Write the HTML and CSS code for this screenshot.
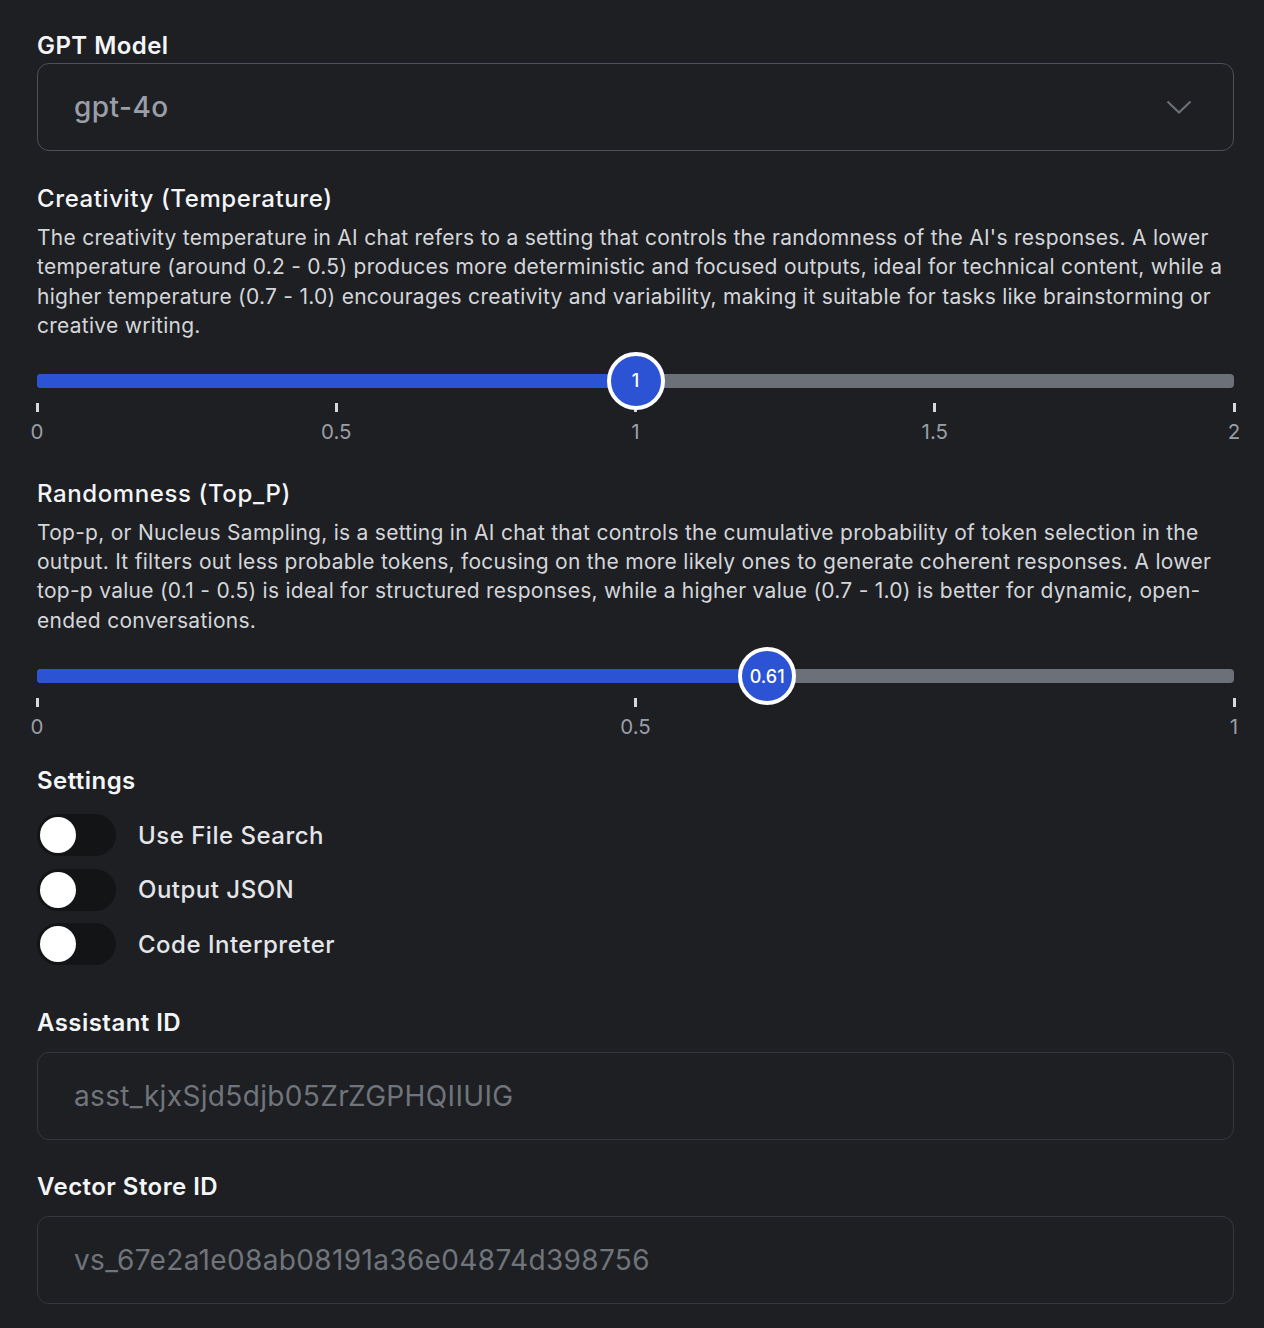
FILE: index.html
```html
<!DOCTYPE html>
<html>
<head>
<meta charset="utf-8">
<link rel="stylesheet" href="styles.css">
</head>
<body>
<div class="panel">
  <div class="field">
    <div class="label">GPT Model</div>
    <div class="select">
      <span class="select-value">gpt-4o</span>
      <svg class="chevron" width="26" height="15" viewBox="0 0 26 15"><path d="M1.5 1.5 L13 12.5 L24.5 1.5" fill="none" stroke="#6b7078" stroke-width="2.2"/></svg>
    </div>
  </div>

  <div class="section">
    <div class="heading">Creativity (Temperature)</div>
    <p class="desc">The creativity temperature in AI chat refers to a setting that controls the randomness of the AI's responses. A lower temperature (around 0.2 - 0.5) produces more deterministic and focused outputs, ideal for technical content, while a higher temperature (0.7 - 1.0) encourages creativity and variability, making it suitable for tasks like brainstorming or creative writing.</p>
    <div class="slider">
      <div class="track">
        <div class="fill" style="width:50%"></div>
        <div class="thumb" style="left:50%">1</div>
      </div>
      <div class="ticks">
        <div class="tick"><span class="mark"></span><span class="tick-label">0</span></div>
        <div class="tick"><span class="mark"></span><span class="tick-label">0.5</span></div>
        <div class="tick"><span class="mark"></span><span class="tick-label">1</span></div>
        <div class="tick"><span class="mark"></span><span class="tick-label">1.5</span></div>
        <div class="tick"><span class="mark"></span><span class="tick-label">2</span></div>
      </div>
    </div>
  </div>

  <div class="section second">
    <div class="heading">Randomness (Top_P)</div>
    <p class="desc">Top-p, or Nucleus Sampling, is a setting in AI chat that controls the cumulative probability of token selection in the output. It filters out less probable tokens, focusing on the more likely ones to generate coherent responses. A lower top-p value (0.1 - 0.5) is ideal for structured responses, while a higher value (0.7 - 1.0) is better for dynamic, open-ended conversations.</p>
    <div class="slider">
      <div class="track">
        <div class="fill" style="width:61%"></div>
        <div class="thumb" style="left:61%">0.61</div>
      </div>
      <div class="ticks">
        <div class="tick"><span class="mark"></span><span class="tick-label">0</span></div>
        <div class="tick"><span class="mark"></span><span class="tick-label">0.5</span></div>
        <div class="tick"><span class="mark"></span><span class="tick-label">1</span></div>
      </div>
    </div>
  </div>

  <div class="settings">
    <div class="heading">Settings</div>
    <div class="toggles">
      <div class="toggle-row"><span class="switch"><span class="knob"></span></span><span class="toggle-label">Use File Search</span></div>
      <div class="toggle-row"><span class="switch"><span class="knob"></span></span><span class="toggle-label">Output JSON</span></div>
      <div class="toggle-row"><span class="switch"><span class="knob"></span></span><span class="toggle-label">Code Interpreter</span></div>
    </div>
  </div>

  <div class="id-field first-id">
    <div class="label">Assistant ID</div>
    <div class="input">asst_kjxSjd5djb05ZrZGPHQIIUIG</div>
  </div>

  <div class="id-field">
    <div class="label">Vector Store ID</div>
    <div class="input">vs_67e2a1e08ab08191a36e04874d398756</div>
  </div>
</div>
</body>
</html>
```

FILE: styles.css
```css
html, body {
  margin: 0;
  padding: 0;
  background: #1e1f23;
}
body {
  font-family: Inter, "Noto Sans", sans-serif;
  color: #f2f3f5;
}
.panel {
  width: 1197px;
  padding: 30px 30px 24px 37px;
  display: flex;
  flex-direction: column;
}
.label, .heading {
  font-size: 24px;
  line-height: 32px;
  font-weight: 600;
  color: #f4f5f7;
  letter-spacing: 0.45px;
}
.heading {
  font-weight: 500;
  letter-spacing: 0.6px;
}
.settings .heading {
  font-weight: 600;
  letter-spacing: 0.45px;
}
.field .label {
  margin-bottom: 1px;
}
.select {
  height: 86px;
  border: 1px solid #4b5059;
  border-radius: 12px;
  display: flex;
  align-items: center;
  justify-content: space-between;
  padding: 0 41px 0 36px;
}
.select-value {
  font-size: 28px;
  color: #9a9ea6;
  font-weight: 500;
  letter-spacing: 0.45px;
}
.chevron {
  display: block;
}
.section {
  margin-top: 32px;
}
.section.second {
  margin-top: 34px;
}
.desc {
  margin: 8px 0 0;
  font-size: 21px;
  line-height: 29.4px;
  color: #d4d6da;
  letter-spacing: 0.27px;
}
.slider {
  margin-top: 33px;
}
.section.second .slider {
  margin-top: 34px;
}
.track {
  position: relative;
  height: 14px;
  background: #6b7079;
  border-radius: 4px;
}
.fill {
  height: 100%;
  background: #2c53d3;
  border-radius: 4px 0 0 4px;
}
.thumb {
  position: absolute;
  top: 50%;
  width: 50px;
  height: 50px;
  border: 4px solid #ffffff;
  border-radius: 50%;
  background: #2c53d3;
  transform: translate(-50%, -50%);
  color: #ffffff;
  font-size: 18px;
  font-weight: 500;
  display: flex;
  align-items: center;
  justify-content: center;
}
.ticks {
  display: flex;
  justify-content: space-between;
  margin-top: 15px;
}
.tick {
  width: 0;
  display: flex;
  flex-direction: column;
  align-items: center;
}
.mark {
  display: block;
  width: 3px;
  height: 9px;
  background: #d6d8dc;
  flex: none;
}
.tick-label {
  margin-top: 8px;
  font-size: 20.5px;
  line-height: 24px;
  color: #9a9ea6;
  white-space: nowrap;
}
.settings {
  margin-top: 26px;
}
.toggles {
  margin-top: 17px;
  display: flex;
  flex-direction: column;
  gap: 12.5px;
}
.toggle-row {
  display: flex;
  align-items: center;
  gap: 22px;
}
.switch {
  width: 79px;
  height: 42px;
  border-radius: 21px;
  background: #131416;
  display: flex;
  align-items: center;
  padding-left: 3px;
  box-sizing: border-box;
}
.knob {
  width: 36px;
  height: 36px;
  border-radius: 50%;
  background: #ffffff;
}
.toggle-label {
  font-size: 24px;
  font-weight: 500;
  color: #e4e5e8;
  letter-spacing: 0.5px;
}
.id-field {
  margin-top: 31px;
}
.id-field.first-id {
  margin-top: 42px;
}
.id-field .label {
  margin-bottom: 13px;
}
.input {
  height: 86px;
  border: 1px solid #34373d;
  border-radius: 12px;
  display: flex;
  align-items: center;
  padding: 0 36px;
  font-size: 28px;
  color: #70747b;
  letter-spacing: 0.35px;
}
```
